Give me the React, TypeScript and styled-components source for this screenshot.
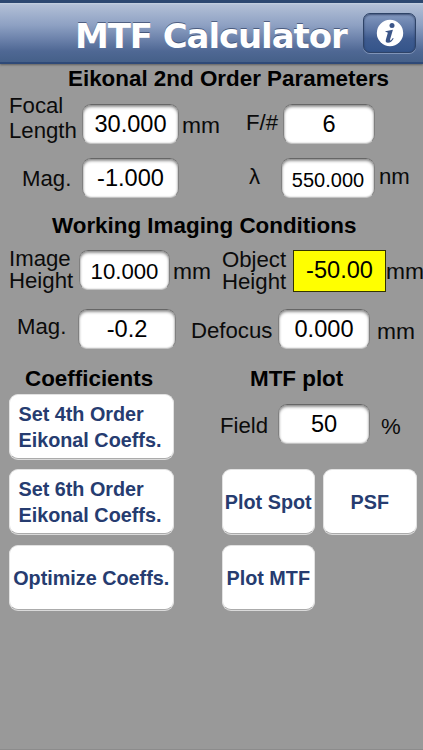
import React from "react";
import styled, { createGlobalStyle } from "styled-components";

const GlobalStyle = createGlobalStyle`
  body { margin: 0; background: #999; }
  * { box-sizing: border-box; }
`;

const Screen = styled.div`
  width: 423px;
  height: 750px;
  overflow: hidden;
  background: #999;
  color: #0b0b0b;
  font-family: "Liberation Sans", Arial, sans-serif;
  border-bottom: 1px solid #8c8c8c;
`;

const Header = styled.header`
  display: flex;
  height: 64px;
  border-top: 3px solid #2c4770;
  border-bottom: 2px solid #2f4a78;
  background: linear-gradient(#c5d0e0 0, #b1bfd6 2px, #8ea1c3 22px, #6c82ab 36px, #4f6894 48px, #456089 100%);
  box-shadow: 0 1px 2px rgba(50, 50, 50, 0.55);
`;

const Title = styled.h1`
  width: 288px;
  margin: 9px 0 0 75px;
  font: bold 34px/49px "DejaVu Sans", Verdana, sans-serif;
  letter-spacing: -1.1px;
  color: #fff;
  text-shadow: 0 -1px 0 rgba(40, 55, 90, 0.65);
  white-space: nowrap;
`;

const InfoButton = styled.button`
  display: grid;
  place-items: center;
  width: 53px;
  height: 40px;
  margin-top: 10px;
  padding: 0;
  border: 1.5px solid #2e4367;
  border-radius: 7px;
  background: linear-gradient(#8298bf, #5f78a6 40%, #3f5c90 65%, #34548a);
  box-shadow: 0 1px 0 rgba(190, 205, 230, 0.45), inset 0 1px 2px rgba(20, 35, 70, 0.6);
`;

const Heading = styled.h2<{ $left: number; $width?: number }>`
  width: ${(p) => p.$width ?? 340}px;
  margin: 0 0 0 ${(p) => p.$left}px;
  font-size: 22.4px;
  line-height: 28px;
  white-space: nowrap;
  color: #000;
`;

const Row = styled.div<{ $gap: number; $height: number }>`
  display: flex;
  align-items: flex-start;
  height: ${(p) => p.$height}px;
  margin-top: ${(p) => p.$gap}px;
`;

const Label = styled.span<{ $width: number; $left?: number; $top: number; $line?: number; $size?: number }>`
  flex: none;
  width: ${(p) => p.$width}px;
  margin: ${(p) => p.$top + 1}px 0 0 ${(p) => p.$left ?? 0}px;
  font-size: ${(p) => p.$size ?? 22.2}px;
  line-height: ${(p) => p.$line ?? 26}px;
  white-space: pre;
`;

const Field = styled.div<{ $width: number; $left?: number; $size?: number; $line?: number }>`
  flex: none;
  width: ${(p) => p.$width}px;
  height: 40px;
  margin: 0 0 0 ${(p) => p.$left ?? 0}px;
  border: 1px solid #808080;
  border-top-color: #666;
  border-bottom-color: #c2c2c2;
  border-radius: 9px;
  background: #fff;
  box-shadow: inset 0 2px 3px rgba(0, 0, 0, 0.42), inset 0 0 2px rgba(0, 0, 0, 0.2);
  color: #000;
  font-size: ${(p) => p.$size ?? 23.6}px;
  line-height: ${(p) => p.$line ?? 39}px;
  text-align: center;
`;

const ResultField = styled(Field)`
  height: 42px;
  border: 1.5px solid #333300;
  border-radius: 0;
  background: #ff0;
  box-shadow: none;
`;

const Action = styled.button<{ $width: number; $left?: number; $align?: string }>`
  flex: none;
  width: ${(p) => p.$width}px;
  height: 65px;
  margin: 0 0 0 ${(p) => p.$left ?? 0}px;
  padding: ${(p) => (p.$align ? "2px 0 0 8.5px" : "2px 0 0")};
  border: 1px solid #e2e2e2;
  border-bottom-color: #ababab;
  border-radius: 9px;
  background: #fff;
  box-shadow: 0 1px 0 #dadada;
  color: #263c70;
  font: bold 19.8px/25.5px "Liberation Sans", Arial, sans-serif;
  text-align: ${(p) => p.$align ?? "center"};
  white-space: pre;
`;

const InfoIcon = () => (
  <svg width="28" height="28" viewBox="0 0 28 28" aria-hidden="true">
    <circle cx="14" cy="14" r="13.2" fill="#fff" />
    <circle cx="16" cy="6.5" r="2.5" fill="#3b5588" />
    <path
      d="M9.6 12.2 Q13 11.4 16.9 10.7 L14.1 20.5 Q13.8 21.6 14.6 21.4 Q15.7 20.9 16.8 19 L17.7 19.6 Q15.4 23.8 12 23.8 Q9 23.7 9.9 20.5 L11.7 14.2 Q12.1 13 9.4 13.1 Z"
      fill="#3b5588"
    />
  </svg>
);

export default function App() {
  return (
    <Screen>
      <GlobalStyle />
      <Header>
        <Title>MTF Calculator</Title>
        <InfoButton aria-label="Info"><InfoIcon /></InfoButton>
      </Header>

      <Row $gap={1} $height={26}>
        <Heading $left={68}>Eikonal 2nd Order Parameters</Heading>
      </Row>
      <Row $gap={13} $height={40}>
        <Label $left={9} $width={73} $top={-12} $line={25}>{"Focal\nLength"}</Label>
        <Field $width={97}>30.000</Field>
        <Label $left={3} $width={64} $top={7} $size={22.8}>mm</Label>
        <Label $width={35} $top={5}>F/#</Label>
        <Field $left={2} $width={92}>6</Field>
      </Row>
      <Row $gap={14} $height={40}>
        <Label $left={22} $width={60} $top={7}>Mag.</Label>
        <Field $width={97}>-1.000</Field>
        <Label $left={70} $width={32} $top={5}>λ</Label>
        <Field $width={94} $size={20} $line={42}>550.000</Field>
        <Label $left={4} $width={42} $top={5}>nm</Label>
      </Row>

      <Row $gap={14} $height={26}>
        <Heading $left={52}>Working Imaging Conditions</Heading>
      </Row>
      <Row $gap={12} $height={42}>
        <Label $left={9} $width={70} $top={-3} $line={22}>{"Image\nHeight"}</Label>
        <Field $width={91} $size={22.2} $line={42}>10.000</Field>
        <Label $left={3} $width={49} $top={7} $size={22.8}>mm</Label>
        <Label $width={71} $top={-2} $line={22}>{"Object\nHeight"}</Label>
        <ResultField $width={93}>-50.00</ResultField>
        <Label $left={0} $width={40} $top={7} $size={22.8}>mm</Label>
      </Row>
      <Row $gap={17} $height={40}>
        <Label $left={17} $width={61} $top={4}>Mag.</Label>
        <Field $width={98}>-0.2</Field>
        <Label $left={15} $width={87} $top={8}>Defocus</Label>
        <Field $width={92}>0.000</Field>
        <Label $left={7} $width={45} $top={8} $size={22.8}>mm</Label>
      </Row>

      <Row $gap={16} $height={26}>
        <Heading $left={25} $width={200}>Coefficients</Heading>
        <Heading $left={25} $width={150}>MTF plot</Heading>
      </Row>
      <Row $gap={3} $height={66}>
        <Action $left={9} $width={164.5} $align="left">{"Set 4th Order\nEikonal Coeffs."}</Action>
        <Label $left={46.5} $width={58} $top={18}>Field</Label>
        <Row $gap={10} $height={40}>
          <Field $width={92}>50</Field>
          <Label $left={11} $width={30} $top={9}>%</Label>
        </Row>
      </Row>
      <Row $gap={9} $height={66}>
        <Action $left={9} $width={164.5} $align="left">{"Set 6th Order\nEikonal Coeffs."}</Action>
        <Action $left={48} $width={93.5}>Plot Spot</Action>
        <Action $left={8} $width={93.5}>PSF</Action>
      </Row>
      <Row $gap={10} $height={66}>
        <Action $left={9} $width={164.5}>Optimize Coeffs.</Action>
        <Action $left={48} $width={93.5}>Plot MTF</Action>
      </Row>
    </Screen>
  );
}
